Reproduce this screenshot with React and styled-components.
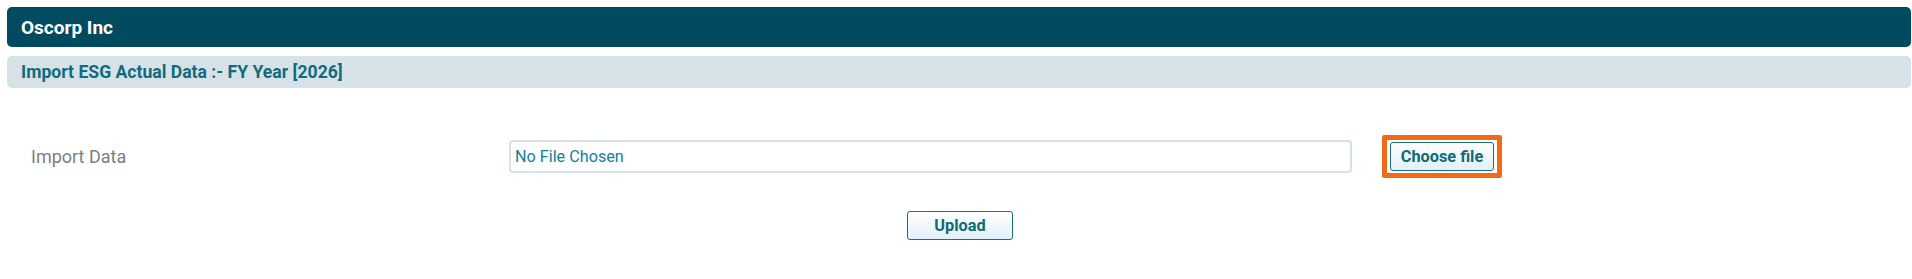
import React from 'react';
import styled, { createGlobalStyle } from 'styled-components';

const GlobalStyle = createGlobalStyle`
  html, body {
    margin: 0;
    padding: 0;
    background: #ffffff;
    font-family: Roboto, "Liberation Sans", Arial, sans-serif;
  }
`;

const Page = styled.div`
  margin: 7px 1px 0 7px;
  display: flex;
  flex-direction: column;
`;

const TitleBar = styled.div`
  height: 40px;
  display: flex;
  align-items: center;
  padding-left: 14px;
  background: #024a5f;
  border-radius: 5px;
  color: #ffffff;
  font-size: 19px;
  font-weight: 700;
`;

const SectionBar = styled.div`
  margin-top: 9px;
  height: 32px;
  display: flex;
  align-items: center;
  padding-left: 14px;
  background: #d7e2e8;
  border-radius: 5px;
  color: #106c7d;
  font-size: 17.6px;
  font-weight: 700;
`;

const FormRow = styled.div`
  margin-top: 47px;
  display: grid;
  grid-template-columns: 448px 843px auto;
  column-gap: 30px;
  align-items: center;
  padding-left: 24px;
`;

const Label = styled.div`
  color: #7a7f86;
  font-size: 18px;
`;

const FileField = styled.div`
  box-sizing: border-box;
  height: 33px;
  display: flex;
  align-items: center;
  padding-left: 4px;
  border: 2px solid #d6e2e6;
  border-radius: 4px;
  color: #137f98;
  font-size: 16.2px;
`;

const Highlight = styled.div`
  justify-self: start;
  border: 5px solid #f26a17;
  border-radius: 2px;
  padding: 2px 3px;
  display: flex;
`;

const Button = styled.button`
  box-sizing: border-box;
  width: ${(p) => p.$width}px;
  height: 29px;
  padding: 0;
  border: 1px solid #18707b;
  border-radius: 3px;
  background: linear-gradient(to bottom, #ffffff, #e2f0fa);
  color: #0e6b78;
  font-family: Roboto, "Liberation Sans", Arial, sans-serif;
  font-size: 16.3px;
  font-weight: 700;
  cursor: pointer;
`;

const Actions = styled.div`
  margin-top: 33px;
  display: flex;
  justify-content: center;
  padding-left: 2px;
`;

export default function App() {
  return (
    <>
      <GlobalStyle />
      <Page>
        <TitleBar>Oscorp Inc</TitleBar>
        <SectionBar>Import ESG Actual Data :- FY Year [2026]</SectionBar>

        <FormRow>
          <Label>Import Data</Label>
          <FileField>No File Chosen</FileField>
          <Highlight>
            <Button $width={104}>Choose file</Button>
          </Highlight>
        </FormRow>

        <Actions>
          <Button $width={106}>Upload</Button>
        </Actions>
      </Page>
    </>
  );
}
